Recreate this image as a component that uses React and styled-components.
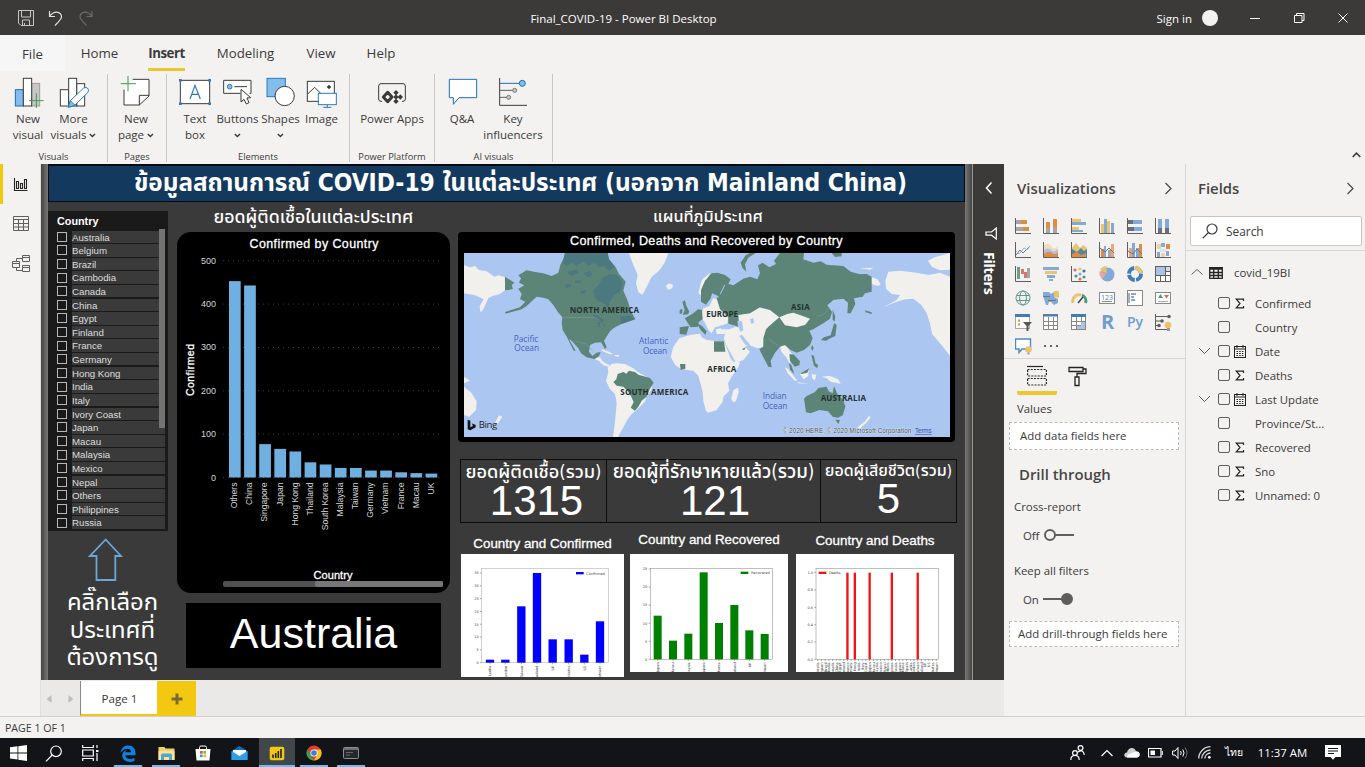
import React from "react";
import styled, { createGlobalStyle } from "styled-components";

const ui = `"Open Sans", "Noto Sans", sans-serif`;
const arial = `"Liberation Sans", Arial, sans-serif`;
const thai = `"DejaVu Sans Condensed", "Noto Sans Thai", "Loma", "Garuda", sans-serif`;

const GlobalStyle = createGlobalStyle`
  * { box-sizing: border-box; }
  body { margin: 0; overflow: hidden; background: #f3f2f1; font-family: ${ui}; color: #3b3a39; }
  svg { display: block; flex: none; }
`;

const Window = styled.div`
  width: 1365px;
  height: 767px;
  display: flex;
  flex-direction: column;
  overflow: hidden;
  background: #f3f2f1;
  white-space: nowrap;
`;

/* ---------- title bar ---------- */
const TitleBar = styled.header`
  height: 35px;
  flex: none;
  background: #3b3a39;
  color: #fff;
  display: grid;
  grid-template-columns: 400px 447px 1fr;
  align-items: center;
  font-size: 11.5px;
`;
const QuickAccess = styled.div`
  display: flex;
  align-items: center;
  gap: 14px;
  padding-left: 18px;
`;
const WindowTitle = styled.div`
  text-align: center;
  padding-top: 1px;
`;
const WindowControls = styled.div`
  display: flex;
  align-items: center;
  justify-content: flex-end;
  padding-right: 17px;
`;
const SignIn = styled.span`
  margin-right: 10px;
  padding-top: 1px;
`;
const Avatar = styled.span`
  width: 16px;
  height: 16px;
  border-radius: 50%;
  background: #f3f2f1;
  margin-right: 32px;
`;

/* ---------- ribbon ---------- */
const TabRow = styled.nav`
  height: 36px;
  flex: none;
  display: flex;
  align-items: stretch;
  font-size: 13.3px;
`;
const FileTab = styled.div`
  width: 65px;
  background: #f6f6f6;
  text-align: center;
  line-height: 39px;
`;
const Tab = styled.div`
  margin-left: ${(p) => p.$gap}px;
  width: ${(p) => p.$w}px;
  line-height: 37px;
  font-weight: ${(p) => (p.$active ? 700 : 400)};
  letter-spacing: ${(p) => (p.$active ? "-0.5px" : "0")};
  border-bottom: 3px solid ${(p) => (p.$active ? "#ecc52f" : "transparent")};
  display: flex;
  justify-content: center;
`;
const Ribbon = styled.div`
  height: 93px;
  flex: none;
  display: flex;
  position: relative;
`;
const Group = styled.section`
  width: ${(p) => p.$w}px;
  margin: 3px 0 2px;
  padding-left: ${(p) => p.$pad}px;
  border-right: 1px solid #c8c6c4;
  display: flex;
  flex-direction: column;
`;
const GroupItems = styled.div`
  display: flex;
  flex: none;
  height: 76px;
`;
const GroupCaption = styled.div`
  flex: none;
  font-size: 9.3px;
  line-height: 13px;
  margin-left: -${(p) => p.$pad}px;
  text-align: center;
`;
const RibbonButton = styled.div`
  width: ${(p) => p.$w}px;
  flex: none;
  display: flex;
  flex-direction: column;
  align-items: center;
  padding-top: 2px;
  font-size: 11.5px;
  line-height: 16px;
  svg.icon { margin-bottom: 3px; }
`;
const LabelLine = styled.div`
  display: flex;
  align-items: center;
  gap: 3px;
  height: 16px;
`;
const RibbonCollapse = styled.div`
  position: absolute;
  right: 4px;
  bottom: 6px;
`;

/* ---------- work area ---------- */
const Work = styled.div`
  height: 552px;
  flex: none;
  display: flex;
`;
const Rail = styled.aside`
  width: 41px;
  display: flex;
  flex-direction: column;
  border-right: 1px solid #e1dfdd;
`;
const RailItem = styled.div`
  height: 40px;
  border-left: 3px solid ${(p) => (p.$active ? "#f2c811" : "transparent")};
  padding-left: 6px;
  display: flex;
  align-items: center;
`;
const Center = styled.div`
  width: 963px;
  display: flex;
  flex-direction: column;
`;
const Stage = styled.div`
  height: 516px;
  display: flex;
`;
const Edge = styled.div`
  width: 7px;
  background: linear-gradient(to right, ${(p) => p.$from}, ${(p) => p.$to});
`;
const Page = styled.main`
  width: 917px;
  background: #3a3a3a;
  color: #fff;
  display: flex;
  flex-direction: column;
  overflow: hidden;
`;
const Banner = styled.h1`
  margin: 0;
  height: 38px;
  flex: none;
  background: #133a5e;
  border: 1px solid #050b12;
  border-top-width: 2px;
  text-align: center;
  padding-left: 28px;
  font: 700 24.3px/34px ${thai};
`;
const Board = styled.div`
  display: flex;
  flex: 1;
`;
const SlicerColumn = styled.div`
  width: 129px;
  padding-top: 9px;
`;
const Slicer = styled.div`
  width: 120px;
  height: 320px;
  background: #1b1a1a;
  padding: 4px 3px 0 9px;
  font-family: ${arial};
`;
const SlicerTitle = styled.div`
  font-size: 10.8px;
  font-weight: 700;
  line-height: 13px;
  height: 14px;
`;
const SlicerBody = styled.div`
  display: flex;
  position: relative;
`;
const SlicerList = styled.div`
  flex: 1;
  padding-top: 1px;
`;
const SlicerRow = styled.div`
  height: 13.62px;
  display: flex;
  align-items: center;
  gap: 5px;
`;
const Box = styled.span`
  width: 10px;
  height: 10px;
  border: 1.5px solid #b9b7b5;
`;
const SlicerLabel = styled.span`
  flex: 1;
  height: 12.4px;
  background: #3a3a3a;
  color: #dedede;
  font-size: 9.7px;
  line-height: 13px;
`;
const SlicerScroll = styled.div`
  position: absolute;
  right: 0;
  top: 0;
  width: 6px;
  height: 199px;
  background: #767472;
`;
const Hint = styled.div`
  width: 120px;
  padding-left: 9px;
  margin-top: 7px;
  display: flex;
  flex-direction: column;
  align-items: center;
  font: 400 23.9px/27.5px ${thai};
  svg { margin: 0 14px 7px 0; }
`;
const ChartColumn = styled.div`
  width: 281px;
`;
const SectionTitle = styled.h2`
  margin: 0;
  height: 30px;
  text-align: center;
  font: 500 ${(p) => p.$size}px/30px ${thai};
  width: ${(p) => p.$w}px;
`;
const ChartCard = styled.div`
  width: 273px;
  height: 361px;
  border-radius: 14px;
  background: #000;
`;
const CountryCard = styled.div`
  width: 255px;
  height: 65px;
  margin: 10px 0 0 9px;
  background: #000;
  text-align: center;
  font: 43px/61px ${arial};
`;
const MapColumn = styled.div`
  width: 507px;
`;
const MapCard = styled.div`
  width: 497px;
  height: 210px;
  border-radius: 4px;
  background: #000;
  padding: 0 6px;
`;
const MapTitle = styled.div`
  text-align: center;
  font: 12.6px/19px ${arial};
  height: 21px;
  -webkit-text-stroke: 0.3px #fff;
  letter-spacing: 0.35px;
`;
const Kpis = styled.div`
  width: 497px;
  height: 64px;
  margin: 17px 0 0 2px;
  border: 1px solid #0c0c0c;
  display: flex;
`;
const Kpi = styled.div`
  width: ${(p) => p.$w}px;
  border-right: ${(p) => (p.$last ? 0 : 1)}px solid #0c0c0c;
  display: flex;
  flex-direction: column;
  align-items: center;
`;
const KpiLabel = styled.div`
  font: 500 ${(p) => p.$size}px/${(p) => p.$h + 1}px ${thai};
  height: ${(p) => p.$h}px;
`;
const KpiValue = styled.div`
  font: 42px/38px ${arial};
  padding-left: ${(p) => p.$shift || 0}px;
`;
const Plots = styled.div`
  display: flex;
  gap: 6px;
  margin: 10px 0 0 3px;
`;
const Plot = styled.figure`
  margin: 0 ${(p) => p.$mr || 0}px 0 0;
  width: ${(p) => p.$w}px;
`;
const PlotTitle = styled.figcaption`
  height: 21px;
  text-align: center;
  font: 13.4px/${(p) => p.$lh}px ${arial};
  -webkit-text-stroke: 0.3px #fff;
`;
const CanvasRule = styled.div`
  width: 1px;
  background: #9a9896;
`;
const FiltersPane = styled.aside`
  width: 31px;
  background: #3b3a39;
  color: #fff;
  display: flex;
  flex-direction: column;
  align-items: center;
  padding-top: 17px;
`;
const FunnelSlot = styled.div`
  margin: 32px 0 12px 6px;
`;
const FiltersLabel = styled.div`
  writing-mode: vertical-rl;
  font-size: 14.2px;
  font-weight: 700;
  letter-spacing: -0.3px;
  line-height: 16px;
`;

/* ---------- page tabs + status ---------- */
const PageTabs = styled.div`
  height: 36px;
  background: #eae9e8;
  display: flex;
  padding-top: 1px;
`;
const PageNav = styled.div`
  width: 39px;
  display: flex;
  align-items: center;
  justify-content: space-between;
  padding: 0 6px 0 5px;
`;
const PageTab = styled.div`
  width: 77px;
  border-left: 1px solid #8a8886;
  border-bottom: 2px solid #f2c811;
  background: #fff;
  text-align: center;
  padding-left: 1px;
  font-size: 11.6px;
  line-height: 35px;
`;
const AddPage = styled.div`
  width: 39px;
  background: #f2c811;
  display: flex;
  align-items: center;
  justify-content: center;
`;
const StatusBar = styled.footer`
  height: 22px;
  flex: none;
  border-top: 1px solid #d2d0ce;
  padding-left: 5px;
  font-size: 10.6px;
  line-height: 23px;
`;

/* ---------- right panes ---------- */
const VizPane = styled.aside`
  width: 182px;
  border-right: 1px solid #d8d6d4;
  font-size: 11.4px;
  display: flex;
  flex-direction: column;
`;
const PaneHead = styled.div`
  display: flex;
  align-items: center;
  justify-content: space-between;
  height: 48px;
  padding: 0 ${(p) => p.$r}px 0 ${(p) => p.$l}px;
  font-size: 14.9px;
  font-weight: 600;
  color: #484644;
`;
const VizGrid = styled.div`
  display: grid;
  grid-template-columns: repeat(6, 28px);
  grid-auto-rows: 24px;
  padding: 2px 0 0 10px;
  height: 147px;
  border-bottom: 1px solid #d8d6d4;
`;
const VizCell = styled.div`
  display: flex;
  align-items: center;
  padding-left: 1px;
`;
const WellTabs = styled.div`
  display: flex;
  height: 36px;
  padding: 6px 0 0 13px;
  gap: 11px;
`;
const WellTab = styled.div`
  width: 40px;
  display: flex;
  justify-content: ${(p) => (p.$active ? "center" : "flex-start")};
  border-bottom: ${(p) => (p.$active ? "4px solid #ecc52f" : "0")};
  border-radius: 2px;
`;
const PaneLabel = styled.div`
  margin-top: ${(p) => p.$mt}px;
  padding-left: ${(p) => p.$l || 13}px;
  line-height: 16px;
`;
const DropWell = styled.div`
  margin: ${(p) => p.$mt}px 6px 0 5px;
  height: ${(p) => p.$h}px;
  line-height: ${(p) => p.$h - 2}px;
  border: 1px dashed #bdbbb9;
  background: #fff;
  padding-left: ${(p) => p.$l}px;
`;
const DrillTitle = styled.div`
  margin-top: 14px;
  padding-left: 15px;
  font-size: 14.9px;
  line-height: 20px;
  font-weight: 600;
  color: #484644;
`;
const Toggle = styled.div`
  display: flex;
  align-items: center;
  gap: 4px;
  height: 16px;
  margin-top: ${(p) => p.$mt}px;
  padding-left: 19px;
`;
const FieldsPane = styled.aside`
  flex: 1;
  font-size: 11.4px;
`;
const Search = styled.div`
  margin: 4px 3px 0 4px;
  height: 30px;
  border: 1px solid #c8c6c4;
  border-radius: 2px;
  background: #fff;
  display: flex;
  align-items: center;
  gap: 8px;
  padding-left: 11px;
  font-size: 11.9px;
`;
const FieldTree = styled.div`
  margin-top: 4px;
  border-top: 1px solid #d8d6d4;
  padding-top: 8px;
`;
const TableRow = styled.div`
  height: 26px;
  display: flex;
  align-items: center;
  padding-left: 5px;
  svg + svg { margin: 2px 11px 0 6px; }
`;
const FieldRows = styled.div`
  padding-top: 6px;
`;
const FieldRow = styled.div`
  height: 24px;
  display: grid;
  grid-template-columns: 20px 15px 22px 1fr;
  padding-left: 12px;
  align-items: center;
`;
const Check = styled.span`
  width: 12px;
  height: 12px;
  border: 1px solid #605e5c;
  border-radius: 2px;
`;
const Kind = styled.span`
  display: flex;
  justify-content: center;
  width: 14px;
`;

/* ---------- taskbar ---------- */
const Taskbar = styled.div`
  height: 29px;
  flex: none;
  background: #121417;
  color: #fff;
  display: flex;
`;
const TaskItem = styled.div`
  width: ${(p) => p.$w || 37}px;
  display: flex;
  flex-direction: column;
  align-items: center;
  background: ${(p) => (p.$active ? "#41464b" : "transparent")};
  &::after {
    content: "";
    width: ${(p) => (p.$active ? "100%" : "28px")};
    height: 2px;
    background: ${(p) => (p.$open ? "#76b9ed" : "transparent")};
  }
`;
const TaskIcon = styled.div`
  flex: 1;
  display: flex;
  align-items: center;
  padding-top: 3px;
`;
const Tray = styled.div`
  margin-left: auto;
  width: 301px;
  display: flex;
  align-items: center;
  font-size: 11.4px;
`;
const TrayItem = styled.div`
  width: ${(p) => p.$w}px;
  display: flex;
  justify-content: center;
  font-size: ${(p) => p.$fs || 11.4}px;
`;

const dark = "#3b3a39";
const blue = "#2b7cb9";

const Caret = () => (
  <svg width="7" height="5" viewBox="0 0 7 5" fill="none" stroke={dark} strokeWidth="1.4"><path d="M.8 1l2.6 2.6L6 1" /></svg>
);

const Icon = ({ x, children }) => (
  <svg className="icon" width="34" height="32" viewBox={`${x} 228 102 96`} fill="none" stroke={dark} strokeWidth="3">{children}</svg>
);

const NewVisualIcon = () => (
  <Icon x={33}>
    <rect x="95" y="250" width="24" height="68" fill="#c8c6c4" stroke="#a19f9d" />
    <rect x="46" y="269" width="24" height="49" fill="#83bdec" stroke="#1f6fad" />
    <rect x="70" y="235" width="25" height="83" fill="#fff" />
    <path d="M109 280v44M87 302h44" stroke="#3f9c54" />
  </Icon>
);
const MoreVisualsIcon = () => (
  <Icon x={171}>
    <rect x="230" y="251" width="24" height="67" fill="#fff" />
    <rect x="181" y="269" width="25" height="49" fill="#fff" />
    <rect x="206" y="235" width="24" height="83" fill="#fff" />
    <path d="M205 322l6-20 40-38q8-4 13 2 4 6-1 12l-39 38z" fill="#fff" stroke={blue} />
    <path d="M205 322l6-20 14 14z" fill="#83bdec" stroke={blue} />
  </Icon>
);
const NewPageIcon = () => (
  <Icon x={358}>
    <path d="M399 238h49v50l-29 27h-46v-46" fill="#fff" />
    <path d="M448 286h-29v29" />
    <path d="M385 228v46M363 251h46" stroke="#3f9c54" />
  </Icon>
);
const TextBoxIcon = () => (
  <Icon x={534}>
    <rect x="541" y="241" width="88" height="70" fill="#fff" />
    <path d="M570 297l15-41 16 41M575 283h21" stroke={blue} strokeWidth="3.6" />
    {[[541, 241], [629, 241], [541, 311], [629, 311]].map(([a, b]) => (
      <rect key={a + "-" + b} x={a - 4} y={b - 4} width="8" height="8" fill={blue} stroke="none" />
    ))}
  </Icon>
);
const ButtonsIcon = () => (
  <Icon x={662}>
    <path d="M720 280h-50v-39h82v39h-4" fill="#fff" />
    <circle cx="688" cy="260" r="7" fill="#83bdec" stroke={blue} />
    <path d="M702 260h38" />
    <path d="M722 268v38l9-8 7 14 8-4-6-14 11-1z" fill="#fff" />
  </Icon>
);
const ShapesIcon = () => (
  <Icon x={790}>
    <rect x="799" y="235" width="55" height="55" fill="#83bdec" stroke={blue} />
    <circle cx="852" cy="288" r="29" fill="#fff" />
  </Icon>
);
const ImageIcon = () => (
  <Icon x={915}>
    <rect x="922" y="244" width="81" height="60" fill="#fff" />
    <path d="M922 283l22-21 18 18" />
    <circle cx="987" cy="261" r="4" fill={dark} />
    <rect x="955" y="280" width="54" height="34" fill="#fff" stroke={blue} />
    <path d="M982 314v8M970 322h24" stroke={blue} />
  </Icon>
);
const PowerAppsIcon = () => (
  <Icon x={1125}>
    <path d="M1146 304h-3q-7 0-7-7v-39q0-7 7-7h66q7 0 7 7v39q0 7-7 7h-3" />
    <path d="M1163 277l13 14-13 14-13-14z" fill="#f3f2f1" strokeWidth="9" strokeLinejoin="round" />
    {[[1188, 278], [1201, 291], [1188, 304], [1188, 291]].map(([a, b]) => (
      <path key={a + "-" + b} d={`M${a} ${b - 8}l8 8-8 8-8-8z`} fill={dark} stroke="none" />
    ))}
  </Icon>
);
const QnaIcon = () => (
  <Icon x={1335}>
    <path d="M1348 238h82v55h-53l-17 20v-20h-12z" fill="#fff" stroke="#1f6fad" />
  </Icon>
);
const InfluencersIcon = () => (
  <Icon x={1488}>
    <path d="M1499 234v82h82" />
    <path d="M1499 250h60" stroke="#1f6fad" />
    <path d="M1499 271h40M1499 292h22" stroke="#605e5c" />
    <circle cx="1567" cy="250" r="9" fill="#83bdec" stroke="#1f6fad" />
    <circle cx="1544" cy="271" r="6" fill="#c8c6c4" stroke="#7a7876" />
    <circle cx="1526" cy="292" r="6" fill="#c8c6c4" stroke="#7a7876" />
  </Icon>
);

const ribbon = [
  { name: "Visuals", w: 108, pad: 5, items: [
    { w: 46, icon: NewVisualIcon, lines: ["New", "visual"] },
    { w: 45, icon: MoreVisualsIcon, lines: ["More", "visuals"], caret: "inline" }] },
  { name: "Pages", w: 59, pad: 5, items: [{ w: 46, icon: NewPageIcon, lines: ["New", "page"], caret: "inline" }] },
  { name: "Elements", w: 183, pad: 7, items: [
    { w: 42, icon: TextBoxIcon, lines: ["Text", "box"] },
    { w: 43, icon: ButtonsIcon, lines: ["Buttons"], caret: "below" },
    { w: 43, icon: ShapesIcon, lines: ["Shapes"], caret: "below" },
    { w: 39, icon: ImageIcon, lines: ["Image"] }] },
  { name: "Power Platform", w: 85, pad: 1, items: [{ w: 82, icon: PowerAppsIcon, lines: ["Power Apps"] }] },
  { name: "AI visuals", w: 118, pad: 4, items: [
    { w: 46, icon: QnaIcon, lines: ["Q&A"] },
    { w: 56, icon: InfluencersIcon, lines: ["Key", "influencers"] }] },
];

const countries = ["Australia", "Belgium", "Brazil", "Cambodia", "Canada", "China", "Egypt", "Finland", "France", "Germany", "Hong Kong", "India", "Italy", "Ivory Coast", "Japan", "Macau", "Malaysia", "Mexico", "Nepal", "Others", "Philippines", "Russia"];

const confirmed = [
  ["Others", 453], ["China", 443], ["Singapore", 77], ["Japan", 66], ["Hong Kong", 60], ["Thailand", 35], ["South Korea", 30],
  ["Malaysia", 22], ["Taiwan", 22], ["Germany", 16], ["Vietnam", 16], ["France", 12], ["Macau", 10], ["UK", 9],
];

const ConfirmedChart = () => (
  <svg width="273" height="361" viewBox="177 232 273 361" fontFamily="Liberation Sans, Arial, sans-serif">
    <text x="314" y="248" fontSize="12.4" fill="#fff" stroke="#fff" strokeWidth=".3" textAnchor="middle" textLength="129">Confirmed by Country</text>
    {[0, 100, 200, 300, 400, 500].map((v) => (
      <g key={v}>
        <line x1="223" x2="443" y1={477.5 - v * 0.4335} y2={477.5 - v * 0.4335} stroke="#3c3c3c" strokeDasharray="1 4" />
        <text x="216" y={480.5 - v * 0.4335} fontSize="9" fill="#d6d6d6" textAnchor="end">{v}</text>
      </g>
    ))}
    {confirmed.map(([name, v], i) => (
      <g key={name}>
        <rect x={229 + i * 15.12} y={477.5 - v * 0.4335} width="11.7" height={v * 0.4335} fill="#70b0e0" />
        <text transform={`translate(${237.2 + i * 15.12} 482.5) rotate(-90)`} fontSize="8.6" fill="#d6d6d6" textAnchor="end">{name}</text>
      </g>
    ))}
    <text transform="translate(194 370) rotate(-90)" fontSize="10.5" fill="#fff" stroke="#fff" strokeWidth=".3" textAnchor="middle" textLength="52">Confirmed</text>
    <text x="333" y="579" fontSize="11" fill="#fff" stroke="#fff" strokeWidth=".3" textAnchor="middle" textLength="39">Country</text>
    <rect x="223" y="581" width="220" height="6" rx="2" fill="#505050" />
    <rect x="315" y="581" width="128" height="6" rx="2" fill="#777" />
  </svg>
);

const green = "#5d8577";
const WorldMap = () => (
  <svg width="486" height="184" viewBox="27 69 1458 552" fontFamily="Open Sans, Noto Sans, sans-serif">
    <rect x="27" y="69" width="1458" height="552" fill="#abc7f1" />
    <g fill="#f1f0ed">
      <path d="M27 105L45 112 60 108 72 120 95 124 118 140 130 136 150 142V180L135 192 112 198 100 205 92 222 84 240 76 247 74 228 86 208 60 196 27 190z" />
      <path d="M522 69H640L632 90 628 100 612 122 590 140 578 165 562 195 550 186 543 160 548 135 538 112 530 92z" />
      <path d="M632 168l10-8 12 4-2 10-12 6z" />
      <path d="M418 386l17-4 8 12 12 8 8 3-2 5-16-4-12-12z" />
      <path d="M458 412L470 402 485 400 510 402 535 415 548 426 575 440 592 455 590 478 575 500 570 515 545 540 530 552 518 568 505 592 497 605 490 621H474L478 590 482 555 485 520 480 492 464 476 453 452 460 428z" />
      <path d="M27 470l22 18 16 26-2 26-20 20-16-5zM27 440l18 12-18 8zM132 556l10 5-14 20-10 2z" />
      <path d="M440 358l24 8 10 7-12-1-22-10zM480 374l14 2-5 5-10-3z" />
    </g>
    <path fill={green} d="M150 140l28 18-8 8 4 10-12 4-12 1zM330 69H458L462 88 482 112 492 132 512 155 505 182 518 212 528 244 541 268 520 275 500 282 480 292 466 302 456 318 447 332 455 352 450 357 438 337 420 338 405 345 402 365 412 378 425 368 437 366 432 378 418 387 395 382 378 370 370 355 350 332 342 328 362 362 356 362 336 322 323 300 320 280 322 262 308 245 295 225 280 208 265 203 245 200 232 212 215 228 200 238 152 251 150 246 195 232 211 215 195 208 200 192 190 176 208 166 192 158 198 145 190 136 215 121 240 126 265 130 290 138 310 128 316 105 326 85z" />
    <g fill="#467584" opacity=".7">
      <path d="M330 69H458L462 88 480 110 462 122 448 108 430 112 420 98 400 108 385 95 365 108 350 98 335 108 322 98z" />
      <path d="M415 180l16-14 12-24 22-10 22 4 16 20-6 28-18 10-12 18-8 22-14-14-18-8-10-14z" />
      <path d="M335 125l30-6 6 10-24 8zM385 130l20-8 8 14-16 6zM360 150l20 2-4 8-16-2zM330 165l14-4 6 8-16 6zM375 185l14-6 4 8-14 6z" />
      <path d="M495 260l30-2 14 10-25 8-15 5zM412 252l22 8 14 12-8 5-20-12zM428 276l8 0-2 16-6-1zM440 280l12 6-4 5z" />
    </g>
    <path d="M325 262h95l12 8M358 332l35 10 20 20" stroke="#86a396" strokeWidth="1.5" fill="none" />
    <path fill={green} d="M488 432L505 426 514 431 522 422 540 426 550 434 585 444 596 458 584 478 575 500 560 512 550 530 540 542 527 533 536 517 528 498 520 486 505 470 485 467 475 456 484 448z" />
    <g transform="translate(735 0)">
      <g fill="#f1f0ed">
        <path d="M-62 325L-30 315 0 311 5 322 20 330 42 332 72 334 82 360 92 385 100 395 120 397 115 412 95 440 84 460 88 482 70 500 68 515 50 540 25 548 18 543 10 512 8 485 0 455 -5 437 -20 422 -55 418 -75 405 -88 380 -80 350z" />
        <path d="M100 480l14-7 2 12-8 28-9 4-5-12z" />
        <path d="M48 298L80 290 118 292 112 255 150 248 175 232 210 240 238 262 205 290 195 320 188 352 172 355 148 345 135 350 150 365 130 390 108 398 95 375 78 345 72 325 75 312 50 312z" />
        <path d="M-5 190L5 150 30 128 18 160 8 200zM10 235L28 228 40 204 55 210 60 232 85 258 82 282 45 292 35 310 25 300 15 278 2 262z" />
        <path d="M240 345l18 2 18 26-6 28-12-20-14-16zM255 412l10 6 27 34-8 0-22-24zM300 432l26-18-1 24-14 10zM290 456l36 6-30-2zM335 432l14 2-4 16-8-4zM366 440l22-3 26 10 8 14-30-6-12-10z" />
        <path d="M508 556l3 8-12 14-20 18-6-4 22-18z" />
        <path d="M512 140l20 8 10 14-8 6-20-6zM556 152L565 125 600 122 650 128 685 135 720 128 750 140V377L722 342 696 312 690 280 680 250 664 225 640 206 615 208 590 215 550 232 590 210 600 195 575 192 558 176z" />
        <path d="M684 92l20-10 46-13v50l-30 2-24-10zM480 115l40-2-10 6z" />
      </g>
      <g fill={green}>
        <path d="M3 215L3 180 15 152 35 130 52 128 75 135 92 148 85 162 72 166 60 192 72 198 62 204 50 196 36 190 32 205 18 224z" />
        <path d="M78 160L100 166 130 146 150 140 172 148 180 130 174 106 188 98 208 112 228 102 222 92 240 69H312L310 88 340 98 362 94 380 104 430 108 452 125 480 133 500 132 515 140V185L495 190 488 200 462 205 466 222 452 250 442 250 444 218 430 206 400 210 382 226 396 246 390 266 370 280 352 290 340 298 328 302 338 325 330 345 312 360 290 368 272 360 255 345 240 350 225 368 212 392 215 412 205 410 190 382 178 358 190 350 190 325 198 298 208 288 238 262 210 240 180 232 150 250 115 255 118 292 102 286 85 282 85 262 60 238 50 205 60 198z" />
        <path d="M122 98l15-22 12-7h18l-22 14-10 20 4 22-12-12zM395 69h30v10l-20 2z" />
        <path d="M-53 215l8-4 3 14 10 20-4 8-16 2 6-15zM-61 240l8-4 0 14-8 2zM-61 292l28-4-8 26-20-2zM-46 265l26-15 14-12 12 2 2 28-12 8-2 14-22 2zM-10 278l16 10 14 16-4 10-14-14z" />
        <path d="M42 334h30l4 31H42zM-60 402h16v14l-14 4zM125 358l12-6-4 8z" />
        <path d="M268 372l14 2 18 20-2 12-14 4-14-18zM266 398l8 8 9 26-12-12zM302 430l26-16-6 14-18 4zM336 345l5 8-4 10-4-8zM334 375l8 2 4 22 8 6-2 10-10-8zM398 238l8 22-2 14-6-4zM402 280l8 4-4 34-14 6-14 8-16-2 10-8 20-6zM495 241l20 6v5l-18-5z" />
        <path d="M312 506L320 498 345 486 355 474 380 470 386 484 398 490 402 468 412 492 430 510 436 530 428 556 414 563 398 560 384 544 358 540 332 550 318 547zM406 569l14 1-5 12z" />
      </g>
      <path fill="#f1f0ed" d="M238 262L262 252 280 248 302 256 330 266 316 284 290 292 255 286z" />
      <path fill="#abc7f1" d="M60 288l24-8 20 12-16 6-24 0zM112 272l14 2 4 26-8 6-8-16zM150 268l10-4 2 14-8 4zM126 315l22 26 2 8-14-4-18-28z" />
      <path d="M385 232q-10 30-35 25M205 325q20 20 35 22" stroke="#86a396" strokeWidth="1.5" fill="none" />
    </g>
    <g fontWeight="700" fontSize="24" fill="#25302d">
      <text x="344" y="250" textLength="208">NORTH AMERICA</text>
      <text x="496" y="495" textLength="204">SOUTH AMERICA</text>
      <text x="754" y="262" textLength="95">EUROPE</text>
      <text x="757" y="426" textLength="87">AFRICA</text>
      <text x="1008" y="241" textLength="56">ASIA</text>
      <text x="1097" y="514" textLength="136">AUSTRALIA</text>
    </g>
    <g fontSize="25" fill="#4762bd">
      <text x="176" y="336" textLength="74">Pacific</text>
      <text x="178" y="364" textLength="74">Ocean</text>
      <text x="552" y="343" textLength="88">Atlantic</text>
      <text x="564" y="371" textLength="72">Ocean</text>
      <text x="923" y="508" textLength="72">Indian</text>
      <text x="923" y="536" textLength="74">Ocean</text>
    </g>
    <path d="M38 569l8 3v20l-8 6zM46 592l8-4-4-8 12 5v7l-16 9-8-3z" fill="#111" />
    <text x="71" y="595" fontSize="29" fill="#222" textLength="56">Bing</text>
    <text x="983" y="609" fontSize="19" fill="#444" fontFamily="Liberation Sans, sans-serif" textLength="386" stroke="#fff" strokeWidth="2" strokeOpacity=".7" paintOrder="stroke">© 2020 HERE, © 2020 Microsoft Corporation</text>
    <text x="1380" y="609" fontSize="19" fill="#3a57a8" fontFamily="Liberation Sans, sans-serif" textDecoration="underline" textLength="50">Terms</text>
  </svg>
);

const BarPlot = ({ w, h, view, frame, color, frameColor, legend, legendX, legendEnd, ticks, bars, barWidth, top }) => {
  const [x0, y0, x1, y1] = frame;
  return (
    <svg width={w} height={h} viewBox={view} fontFamily="DejaVu Sans, sans-serif" fontSize="10.5" fill="#444">
      <rect x="0" y="300" width="1100" height="400" fill="#fff" />
      <rect x={x0} y={y0} width={x1 - x0} height={y1 - y0} fill="none" stroke={frameColor} strokeWidth="1.6" />
      {ticks.map((t, i) => {
        const y = top + ((y1 - top) * i) / (ticks.length - 1);
        return (
          <g key={t}>
            <path d={`M${x0 - 5} ${y}H${x0}`} stroke="#555" strokeWidth="1.5" />
            <text x={x0 - 9} y={y + 4} textAnchor="end">{t}</text>
          </g>
        );
      })}
      {bars.map(([x, y, name], i) => (
        <g key={i}>
          {y < y1 && <rect x={x - barWidth / 2} y={y} width={barWidth} height={y1 - y} fill={color} />}
          <path d={`M${x} ${y1}v5`} stroke="#555" strokeWidth="1.5" />
          <text transform={`translate(${x + 4} ${y1 + 9}) rotate(-90)`} textAnchor="end">{name}</text>
        </g>
      ))}
      <rect x={legendX} y={y0 + 10} width="23" height="7" fill={color} />
      <text x={legendX + 31} y={y0 + 18} textLength={legendEnd - legendX - 31}>{legend}</text>
    </svg>
  );
};

const bluePlot = {
  w: 163, h: 123, view: "18 314 489 369", frame: [80, 358, 460, 640], color: "#0000ff", frameColor: "#aaa",
  legend: "Confirmed", legendX: 363, legendEnd: 450, ticks: [35, 30, 25, 20, 15, 10, 5, 0], barWidth: 25, top: 371,
  bars: [[105, 631, "Sri Lanka"], [151, 631, "Sweden"], [199, 471, "Taiwan"], [246, 371, "Thailand"], [293, 570, "UK"], [341, 570, "Emirates"], [388, 616, "US"], [435, 516, "Vietnam"]],
};
const greenPlot = {
  w: 158, h: 118, view: "526 312 474 354", frame: [587, 355, 954, 628], color: "#008000", frameColor: "#888",
  legend: "Recovered", legendX: 858, legendEnd: 945, ticks: [25, 20, 15, 10, 5, 0], barWidth: 24, top: 357,
  bars: [[609, 497, "Japan"], [655, 572, "Macau"], [701, 551, "Malaysia"], [747, 367, "Singapore"], [793, 519, "South Korea"], [839, 465, "Thailand"], [884, 541, "UK"], [930, 552, "Vietnam"]],
};
const deathNames = ["Australia", "Belgium", "Brazil", "Cambodia", "Canada", "China", "Egypt", "Finland", "France", "Germany", "Hong Kong", "India", "Italy", "Ivory Coast", "Japan", "Macau", "Malaysia", "Mexico", "Nepal", "Others", "Philippines", "Russia", "Singapore", "South Korea", "Spain", "Sri Lanka", "Sweden", "Taiwan", "Thailand", "UK", "US", "Emirates", "Vietnam"];
const deathIndex = { 8: 1, 10: 1, 14: 1, 20: 1, 27: 1 };
const redPlot = {
  w: 158, h: 118, view: "290 312 474 354", frame: [350, 355, 718, 628], color: "#f01414", frameColor: "#888",
  legend: "Deaths", legendX: 358, legendEnd: 424, ticks: ["1.0", "0.8", "0.6", "0.4", "0.2", "0.0"], barWidth: 7, top: 368,
  bars: deathNames.map((n, i) => [355.5 + i * 11.1, deathIndex[i] ? 368 : 628, n]),
};

const axis = <path d="M.5 0v15.5H16" stroke="#605e5c" fill="none" />;
const O = "#e08c42", G = "#a8a6a4", B = "#83a9d6", Y = "#e9c46f", D = "#6a6e78";
const rects = (list) => list.map(([x, y, w, h, f], i) => <rect key={i} x={x} y={y} width={w} height={h} fill={f} />);
const vizIcons = [
  <>{axis}{rects([[1, 2, 5, 4, G], [6, 2, 6, 4, O], [1, 9, 7, 4, G], [8, 9, 6, 4, O]])}</>,
  <>{axis}{rects([[3, 4, 4, 6, O], [3, 10, 4, 5, G], [10, 1, 4, 8, O], [10, 9, 4, 6, G]])}</>,
  <>{axis}{rects([[1, 1, 9, 3, Y], [1, 4, 14, 3, B], [1, 9, 7, 3, Y], [1, 12, 11, 2, B]])}</>,
  <>{axis}{rects([[2, 6, 3, 9, Y], [5, 1, 3, 14, B], [8, 3, 3, 12, Y], [12, 5, 3, 10, B]])}</>,
  <>{axis}{rects([[1, 2, 5, 4, D], [6, 2, 9, 4, B], [1, 9, 6, 4, D], [7, 9, 8, 4, B]])}</>,
  <>{axis}{rects([[3, 1, 4, 9, B], [3, 10, 4, 5, D], [10, 1, 4, 9, B], [10, 10, 4, 5, D]])}</>,
  <>{axis}<path d="M1 13l4-5 3 3 7-7" stroke="#777" fill="none" /><path d="M1 9l3 3 5-6 3 2 3-4" stroke="#9bb6d8" fill="none" /></>,
  <>{axis}<path d="M1 4q4-5 7 0t7 0v10H1z" fill="#f3dcb6" /><path d="M1 8q4-3 7 0t7-1v8H1z" fill="#a9c4e4" /><path d="M1 12q5-4 8-1t6-1v5H1z" fill={O} /></>,
  <>{axis}<path d="M1 6l4-5 4 5 3-3 4 3v9H1z" fill={Y} /><path d="M1 7l5 3 4-4 3 3 3-2v8H1z" fill="#4f86a8" /><path d="M1 12l5-2 4 3 5-2v4H1z" fill={O} /></>,
  <>{axis}{rects([[2, 7, 3, 8, O], [5, 4, 2, 11, B], [9, 8, 3, 7, G], [12, 2, 3, 13, "#e8a878"]])}<path d="M1 6l5 4 4-4 5 5" stroke="#777" fill="none" /></>,
  <>{axis}{rects([[2, 6, 3, 9, "#e8a878"], [5, 1, 3, 14, B], [9, 6, 3, 9, B], [12, 2, 3, 13, O]])}<path d="M1 9l5 3 4-5 5 5" stroke="#777" fill="none" /></>,
  <>{axis}{rects([[2, 2, 4, 5, "#ecd3a5"], [6, 1, 4, 4, B], [11, 2, 4, 5, O], [2, 10, 3, 5, B], [6, 11, 4, 4, "#ecd3a5"], [11, 9, 3, 5, B]])}<path d="M5 7h6v3H5z" fill="#d9e4f1" /></>,
  <>{axis}{rects([[2, 1, 3, 12, "#6e9e8a"], [6, 3, 3, 5, "#cf7a70"], [9, 6, 3, 6, "#cf7a70"], [12, 2, 3, 10, G]])}</>,
  <>{rects([[0, 1, 16, 3, B], [2, 5, 12, 3, Y], [4, 9, 8, 3, B], [6, 13, 4, 2, B]])}</>,
  <>{axis}{[[4, 4, "#d96f64"], [9, 3, Y], [13, 5, "#3f73ad"], [5, 10, "#4d9a7c"], [9, 8, B], [13, 11, "#4d9a7c"], [9, 13, "#d96f64"]].map(([a, b, c], i) => <circle key={i} cx={a} cy={b} r="1.6" fill={c} />)}</>,
  <><circle cx="8.5" cy="8.5" r="7" fill={B} /><path d="M7.5 7.5L7.5 0A8 8 0 0 0 1 4z" fill={Y} /><path d="M7 8L.6 5A8 8 0 0 0 3 13z" fill="#e8a8a0" /></>,
  <><circle cx="8" cy="8" r="6" fill="none" stroke="#3f7cba" strokeWidth="4" strokeDasharray="8 1.4" /><path d="M8 2a6 6 0 0 1 6 5" stroke={Y} strokeWidth="4" fill="none" /></>,
  <><rect x=".5" y=".5" width="15" height="15" fill="#fff" stroke="#605e5c" /><rect x="1" y="1" width="9" height="8" fill="#a9c4e4" /><rect x="11" y="1" width="4" height="5" fill="#cfdcec" /><path d="M0 9.5h16M10.5 0v16M10 5.5h6M5.5 10v6" stroke="#605e5c" fill="none" /></>,
  <g fill="none" stroke="#5c9a90"><circle cx="8" cy="8" r="7" /><ellipse cx="8" cy="8" rx="3.4" ry="7" /><path d="M1.5 5.5h13M1.5 10.5h13" /></g>,
  <><path d="M0 2h6l2 2 3-2v5l4 2v4l-4 2-3-3H6l-1 3H3L0 6z" fill={B} /><path d="M11 1h5v7l-5-1z" fill={Y} /><path d="M0 6.500h7M5 10.500h8" stroke="#777" fill="none" /></>,
  <><path d="M2 13A6.5 6.5 0 0 1 10 5" stroke={Y} strokeWidth="3" fill="none" /><path d="M11 5a6.5 6.5 0 0 1 3.500 8" stroke="#4d9a7c" strokeWidth="3" fill="none" /><path d="M7 13l5-6" stroke="#444" strokeWidth="1.5" /></>,
  <><rect x=".5" y="2.500" width="15" height="11" fill="#fff" stroke="#8a8886" /><text x="8" y="9.500" fontSize="7" textAnchor="middle" fill="#3f7cba" fontFamily="Open Sans">123</text><path d="M3 11.500h10" stroke="#888" /></>,
  <><rect x=".5" y=".5" width="15" height="15" fill="#fff" stroke="#8a8886" /><path d="M2 3v10" stroke="#605e5c" /><path d="M4 4h5M4 7h3M4 10h4" stroke={B} strokeWidth="2" /></>,
  <><rect x=".5" y="2.500" width="15" height="11" fill="#fff" stroke="#8a8886" /><path d="M3 8l2.500-4L8 8z" fill="#4d9a7c" /><path d="M9 5h5l-2.500 3.500z" fill="#cf6a60" /><path d="M3 11.500h10" stroke="#aaa" /></>,
  <><rect x=".5" y=".5" width="14" height="14" fill="#fff" stroke="#a8a6a4" /><path d="M0 1.500h15" stroke="#3f7cba" strokeWidth="3" /><path d="M3 6.500h2M3 10.500h2" stroke={O} strokeWidth="2" /><path d="M8 8h9l-3.500 4v5h-2v-5z" fill="#555" /></>,
  <><rect x=".5" y=".5" width="14" height="15" fill="#fff" stroke="#8a8886" /><path d="M0 1.500h15" stroke="#3f7cba" strokeWidth="2" /><path d="M5.500 3v13M10.500 3v13M0 7.500h15M0 11.500h15" stroke="#8a8886" /></>,
  <><rect x=".5" y=".5" width="14" height="15" fill="#fff" stroke="#8a8886" /><path d="M0 1.500h15" stroke="#3f7cba" strokeWidth="3" /><path d="M5.500 3v13M10.500 3v13M0 7.500h15M0 11.500h15" stroke="#8a8886" /><path d="M10 8h4v7H6v-3h4z" fill="#a9c4e4" /></>,
  <text x="8.500" y="15" fontSize="20" fontWeight="700" textAnchor="middle" fill="#6f9dd0" fontFamily="Open Sans">R</text>,
  <text x="8" y="12.500" fontSize="14" fontWeight="600" textAnchor="middle" fill="#6f9dd0" fontFamily="Open Sans">Py</text>,
  <><path d="M.5 0v15.500H12M1 2.500h12M1 7h6M1 11.500h3" stroke="#605e5c" fill="none" /><circle cx="14" cy="2.500" r="1.800" fill="#605e5c" /><circle cx="7" cy="7" r="1.800" fill="#605e5c" /><circle cx="4" cy="11.500" r="1.800" fill="#605e5c" /><circle cx="13" cy="11" r="3.300" fill={Y} /><path d="M12 14h3v3h-3z" fill="#999" /></>,
  <><path d="M.5 1h15v10H7l-3 3.500V11H.5z" fill="#fff" stroke="#4a8cc4" strokeWidth="1.400" /><circle cx="13.500" cy="11.500" r="3.300" fill={Y} /><path d="M12.500 14.500h2v2h-2z" fill="#999" /></>,
  <g fill="#444"><circle cx="2" cy="8" r="1.100" /><circle cx="8" cy="8" r="1.100" /><circle cx="14" cy="8" r="1.100" /></g>,
];

const Sigma = () => (
  <svg width="10" height="11" viewBox="0 0 10 11" fill="none" stroke="#252423" strokeWidth="1.2"><path d="M8.500 3V1.200H1.300L5 5.500 1.300 9.800H8.500V8" /></svg>
);
const Calendar = () => (
  <svg width="12" height="13" viewBox="0 0 12 13" fill="none" stroke="#252423"><rect x=".5" y="1.500" width="11" height="11" /><path d="M.5 4h11M3 0v3M9 0v3" /><path d="M2.500 6.500h7M2.500 8.500h7M2.500 10.500h7" strokeDasharray="1.500 1.200" /></svg>
);
const ChevronDown = () => (
  <svg width="13" height="8" viewBox="0 0 13 8" fill="none" stroke="#605e5c"><path d="M1 1l5.500 5.500L12 1" /></svg>
);
const ChevronRight = () => (
  <svg width="9" height="13" viewBox="0 0 9 13" fill="none" stroke="#484644" strokeWidth="1.200"><path d="M1.500 1l5.500 5.500-5.500 5.500" /></svg>
);

const fields = [["Confirmed", "sum"], ["Country"], ["Date", "date"], ["Deaths", "sum"], ["Last Update", "date"], ["Province/St..."], ["Recovered", "sum"], ["Sno", "sum"], ["Unnamed: 0", "sum"]];

const taskItems = [
  { w: 36, icon: <svg width="17" height="16" viewBox="0 0 17 16" fill="#fff"><path d="M0 2.300L7.500 1.300v6.200H0zM8.300 1.200L17 0v7.500H8.300zM0 8.400h7.500v6.200L0 13.600zM8.300 8.400H17V16L8.300 14.800z" /></svg> },
  { w: 36, icon: <svg width="18" height="17" viewBox="0 0 18 17" fill="none" stroke="#fff" strokeWidth="1.200"><circle cx="11" cy="6.300" r="5.300" /><path d="M7.200 10L1 16.300" /></svg> },
  { w: 37, icon: <svg width="17" height="16" viewBox="0 0 17 16" fill="none" stroke="#fff" strokeWidth="1.200"><path d="M.7 0v2.500h10.600V0M.7 16v-2.500h10.600V16M.7 5h10.600v6H.7zM15 0v3M15 8v8" /><path d="M14 5h2.500v2H14z" fill="#fff" stroke="none" /></svg> },
  { w: 38, open: true, icon: <svg width="16" height="17" viewBox="0 0 16 17"><path d="M.5 7.800C1.200 3 4.300.5 8.200.5c4.700 0 7.300 3.300 7.300 7.800v1.900H5.300c.2 4.300 5.700 4.600 9.200 2.500v3.200c-5.800 2.500-12.200.2-12.200-5.300 0-3 1.700-5 4.400-5.900C5.700 5.600 5.400 6.500 5.300 7.300h5.700c.3-4.300-6.500-5.200-10.500.5z" fill="#1080dc" /></svg> },
  { w: 38, open: true, icon: <svg width="17" height="15" viewBox="0 0 17 15"><path d="M.5 1h6l1 1.500h9V14H.5z" fill="#f2d06b" /><path d="M.5 5h16v9H.5z" fill="#fbe296" /><path d="M3 14V9q0-1.500 1.500-1.500h8Q14 7.500 14 9v5h-3v-3H6v3z" fill="#4ba7d6" /></svg> },
  { w: 35, icon: <svg width="16" height="16" viewBox="0 0 16 16"><path d="M4.500 5V2.500Q4.500 1 6 1h4q1.500 0 1.500 1.500V5" stroke="#fff" fill="none" /><path d="M.5 4h15l-1 11.500h-13z" fill="#fff" /><path d="M5 6h2.700v2.700H5z" fill="#e8552d" /><path d="M8.400 6h2.700v2.700H8.400z" fill="#7eb52b" /><path d="M5 9.500h2.700v2.700H5z" fill="#2aa3e0" /><path d="M8.400 9.500h2.700v2.700H8.400z" fill="#f5b51e" /></svg> },
  { w: 39, icon: <svg width="17" height="14" viewBox="0 0 17 14"><path d="M.5 5L8.500 0l8 5v9H.5z" fill="#0f6cbd" /><path d="M2 4h13v5l-6.500 3L2 9z" fill="#fff" /><path d="M.5 5l8 5 8-5v9H.5z" fill="#2ba0ea" /></svg> },
  { w: 36, open: true, active: true, icon: <svg width="16" height="15" viewBox="0 0 16 15"><rect x=".7" y=".7" width="14.600" height="13.600" rx="2" fill="#f2c811" /><path d="M4 12V8.500M6.700 12V7M9.300 12V5M12 12V3" stroke="#222" strokeWidth="1.600" /></svg> },
  { w: 38, open: true, icon: <svg width="16" height="16" viewBox="0 0 16 16"><circle cx="8" cy="8" r="7.500" fill="#e33b2e" /><path d="M1.500 4.300L5 10.500 8 15.500A7.500 7.500 0 0 1 1.500 4.300z" fill="#2da44e" /><path d="M8 4.500h6.700A7.500 7.500 0 0 1 8 15.500l3-6z" fill="#fbc116" /><circle cx="8" cy="8" r="3.600" fill="#fff" /><circle cx="8" cy="8" r="2.800" fill="#3b7de0" /></svg> },
  { w: 36, open: true, icon: <svg width="16" height="13" viewBox="0 0 16 13"><rect x=".5" y=".5" width="15" height="11" rx="1" fill="#25282c" stroke="#8b8f94" /><path d="M1 2h14" stroke="#b4b8bc" /><path d="M3 5.500h7M3 8h4" stroke="#666" /></svg> },
];

export default function App() {
  return (
    <Window>
      <GlobalStyle />
      <TitleBar>
        <QuickAccess>
          <svg width="16" height="16" viewBox="0 0 16 16" fill="none" stroke="#c8c6c4"><path d="M1 .5h14.500v15H3L.5 13V.5zM3.500 1v6h9V1M4.500 15v-5h7v5M6.500 13v2" /></svg>
          <svg width="16" height="16" viewBox="0 0 16 16" fill="none" stroke="#e1dfdd" strokeWidth="1.200"><path d="M1.500 1v5.500H7M1.500 6.500Q5 2 8.500 2.200 13.500 2.800 13.500 7 13.500 9 7 15.500" /></svg>
          <svg width="16" height="16" viewBox="0 0 16 16" fill="none" stroke="#6e6c6a" strokeWidth="1.200"><path d="M14 1v5.500H8.500M14 6.500Q10.500 2 7 2.200 2 2.800 2 7 2 9 8.500 15.500" /></svg>
        </QuickAccess>
        <WindowTitle>Final_COVID-19 - Power BI Desktop</WindowTitle>
        <WindowControls>
          <SignIn>Sign in</SignIn>
          <Avatar />
          <svg width="98" height="12" viewBox="0 0 98 12" fill="none" stroke="#fff"><path d="M0 6.500h10M44.500 3.500h7.500v7h-7.500zM46.500 3V1.500h7.500v7H52M88.500 1.500l9 9M97.500 1.500l-9 9" /></svg>
        </WindowControls>
      </TitleBar>

      <TabRow>
        <FileTab>File</FileTab>
        <Tab $gap={16} $w={37}>Home</Tab>
        <Tab $gap={30} $w={37} $active>Insert</Tab>
        <Tab $gap={31} $w={59}>Modeling</Tab>
        <Tab $gap={31} $w={30}>View</Tab>
        <Tab $gap={30} $w={30}>Help</Tab>
      </TabRow>
      <Ribbon>
        {ribbon.map((g) => (
          <Group key={g.name} $w={g.w} $pad={g.pad}>
            <GroupItems>
              {g.items.map(({ w, icon: Glyph, lines, caret }) => (
                <RibbonButton key={lines.join()} $w={w}>
                  <Glyph />
                  {lines.map((l, i) => (
                    <LabelLine key={l}>{l}{caret === "inline" && i === lines.length - 1 && <Caret />}</LabelLine>
                  ))}
                  {caret === "below" && <LabelLine><Caret /></LabelLine>}
                </RibbonButton>
              ))}
            </GroupItems>
            <GroupCaption $pad={g.pad}>{g.name}</GroupCaption>
          </Group>
        ))}
        <RibbonCollapse>
          <svg width="9" height="6" viewBox="0 0 9 6" fill="none" stroke={dark} strokeWidth="1.600"><path d="M.7 5l3.800-3.800L8.300 5" /></svg>
        </RibbonCollapse>
      </Ribbon>

      <Work>
        <Rail>
          <RailItem $active>
            <svg width="24" height="18" viewBox="0 0 24 18" fill="none" stroke="#252423" strokeWidth="1.100"><path d="M5.500 3v12.500H18.500M7.500 6.500h2v7h-2zM11.500 8.500h2v5h-2zM15.500 4.500h2v9h-2z" /></svg>
          </RailItem>
          <RailItem>
            <svg width="24" height="18" viewBox="0 0 24 18" fill="none" stroke="#605e5c"><path d="M4.500 1.500h15v14h-15zM4.500 4.500h15M4.500 8.500h15M4.500 12h15M9.500 4.500v11M14.500 4.500v11" /></svg>
          </RailItem>
          <RailItem>
            <svg width="24" height="20" viewBox="0 0 24 20" fill="none" stroke="#605e5c"><path d="M3.500 7.500h7v6h-7zM13.500 1.500h7v6h-7zM13.500 11.500h7v6h-7zM3.500 9.500h7M13.500 3.500h7M13.500 13.500h7M7.500 7V4.500h6M7.500 14v2.500h6" /></svg>
          </RailItem>
        </Rail>

        <Center>
          <Stage>
            <Edge $from="#454443" $to="#787878" />
            <Page>
              <Banner>ข้อมูลสถานการณ์ COVID-19 ในแต่ละประเทศ (นอกจาก Mainland China)</Banner>
              <Board>
                <SlicerColumn>
                  <Slicer>
                    <SlicerTitle>Country</SlicerTitle>
                    <SlicerBody>
                      <SlicerList>
                        {countries.map((c) => (
                          <SlicerRow key={c}><Box /><SlicerLabel>{c}</SlicerLabel></SlicerRow>
                        ))}
                      </SlicerList>
                      <SlicerScroll />
                    </SlicerBody>
                  </Slicer>
                  <Hint>
                    <svg width="36" height="44" viewBox="0 0 36 44" fill="none" stroke="#6ba8da" strokeWidth="1.800"><path d="M17.700 1.500L33 18H27.300V42H8.500V18H2z" /></svg>
                    <span>คลิ๊กเลือก</span>
                    <span>ประเทศที่</span>
                    <span>ต้องการดู</span>
                  </Hint>
                </SlicerColumn>
                <ChartColumn>
                  <SectionTitle $w={273} $size={17.8}>ยอดผู้ติดเชื้อในแต่ละประเทศ</SectionTitle>
                  <ChartCard><ConfirmedChart /></ChartCard>
                  <CountryCard>Australia</CountryCard>
                </ChartColumn>
                <MapColumn>
                  <SectionTitle $w={500} $size={16.3}>แผนที่ภูมิประเทศ</SectionTitle>
                  <MapCard>
                    <MapTitle>Confirmed, Deaths and Recovered by Country</MapTitle>
                    <WorldMap />
                  </MapCard>
                  <Kpis>
                    <Kpi $w={146}><KpiLabel $size={18.2} $h={22}>ยอดผู้ติดเชื้อ(รวม)</KpiLabel><KpiValue $shift={6}>1315</KpiValue></Kpi>
                    <Kpi $w={214}><KpiLabel $size={18.6} $h={22}>ยอดผู้ที่รักษาหายแล้ว(รวม)</KpiLabel><KpiValue $shift={3}>121</KpiValue></Kpi>
                    <Kpi $w={135} $last><KpiLabel $size={16} $h={20}>ยอดผู้เสียชีวิต(รวม)</KpiLabel><KpiValue>5</KpiValue></Kpi>
                  </Kpis>
                  <Plots>
                    <Plot $w={163}><PlotTitle $lh={22}>Country and Confirmed</PlotTitle><BarPlot {...bluePlot} /></Plot>
                    <Plot $w={158} $mr={2}><PlotTitle $lh={14}>Country and Recovered</PlotTitle><BarPlot {...greenPlot} /></Plot>
                    <Plot $w={158}><PlotTitle $lh={16}>Country and Deaths</PlotTitle><BarPlot {...redPlot} /></Plot>
                  </Plots>
                </MapColumn>
              </Board>
            </Page>
            <Edge $from="#787878" $to="#454443" />
            <CanvasRule />
            <FiltersPane>
              <svg width="8" height="14" viewBox="0 0 8 14" fill="none" stroke="#fff" strokeWidth="1.500"><path d="M6.500 1.500L1.500 7l5 5.500" /></svg>
              <FunnelSlot>
                <svg width="13" height="13" viewBox="0 0 13 13" fill="none" stroke="#fff" strokeWidth="1.200"><path d="M11.300 1v11L6.500 8.200H1V5h5.500z" /></svg>
              </FunnelSlot>
              <FiltersLabel>Filters</FiltersLabel>
            </FiltersPane>
          </Stage>
          <PageTabs>
            <PageNav>
              <svg width="6" height="8" viewBox="0 0 6 8" fill="#c0bebc"><path d="M5.500 0v8L.5 4z" /></svg>
              <svg width="6" height="8" viewBox="0 0 6 8" fill="#c0bebc"><path d="M.5 0v8l5-4z" /></svg>
            </PageNav>
            <PageTab>Page 1</PageTab>
            <AddPage>
              <svg width="12" height="12" viewBox="0 0 12 12" stroke="#7b6a2e" strokeWidth="3"><path d="M6 .5v11M.5 6h11" /></svg>
            </AddPage>
          </PageTabs>
        </Center>

        <VizPane>
          <PaneHead $l={13} $r={12}>Visualizations<ChevronRight /></PaneHead>
          <VizGrid>
            {vizIcons.map((icon, i) => (
              <VizCell key={i}><svg width="17" height="17" viewBox="0 0 17 17">{icon}</svg></VizCell>
            ))}
          </VizGrid>
          <WellTabs>
            <WellTab $active>
              <svg width="20" height="22" viewBox="0 0 20 22" fill="none" stroke="#252423" strokeWidth="1.200"><path d="M0 1.500h16" /><rect x=".6" y="4.500" width="18.800" height="6.500" strokeDasharray="2 1.200" /><rect x=".6" y="13.500" width="18.800" height="6.500" strokeDasharray="2 1.200" /></svg>
            </WellTab>
            <WellTab>
              <svg width="20" height="22" viewBox="0 0 20 22" fill="none" stroke="#252423" strokeWidth="1.300"><path d="M1 2.500h14v4H1zM15 4h3v4.500H9V12M7 12h4v8.500H7z" /></svg>
            </WellTab>
          </WellTabs>
          <PaneLabel $mt={6}>Values</PaneLabel>
          <DropWell $mt={5} $h={28} $l={10}>Add data fields here</DropWell>
          <DrillTitle>Drill through</DrillTitle>
          <PaneLabel $mt={15} $l={10}>Cross-report</PaneLabel>
          <Toggle $mt={12}>
            Off
            <svg width="30" height="12" viewBox="0 0 30 12" fill="none" stroke="#605e5c" strokeWidth="2"><circle cx="6" cy="6" r="5" /><path d="M11 6h19" /></svg>
          </Toggle>
          <PaneLabel $mt={20} $l={10}>Keep all filters</PaneLabel>
          <Toggle $mt={12}>
            On
            <svg width="30" height="12" viewBox="0 0 30 12" fill="#605e5c" stroke="#605e5c" strokeWidth="2"><circle cx="24" cy="6" r="5" /><path d="M0 6h19" /></svg>
          </Toggle>
          <DropWell $mt={14} $h={26} $l={8}>Add drill-through fields here</DropWell>
        </VizPane>

        <FieldsPane>
          <PaneHead $l={12} $r={10}>Fields<ChevronRight /></PaneHead>
          <Search>
            <svg width="16" height="16" viewBox="0 0 16 16" fill="none" stroke="#3b3a39" strokeWidth="1.200"><circle cx="10" cy="6" r="5" /><path d="M6.500 9.500L.8 15.200" /></svg>
            Search
          </Search>
          <FieldTree>
            <TableRow>
              <svg width="12" height="8" viewBox="0 0 12 8" fill="none" stroke="#605e5c"><path d="M.5 6.500L6 1.500l5.500 5" /></svg>
              <svg width="14" height="12" viewBox="0 0 14 12" fill="none" stroke="#252423" strokeWidth="1.300"><path d="M.7.7h12.600v10.600H.7zM.7 2h12.600M.7 5.500h12.600M.7 8.500h12.600M4.700 2v9M9.300 2v9" /></svg>
              covid_19BI
            </TableRow>
            <FieldRows>
              {fields.map(([name, kind]) => (
                <FieldRow key={name}>
                  <span>{kind === "date" && <ChevronDown />}</span>
                  <Check />
                  <Kind>{kind === "sum" && <Sigma />}{kind === "date" && <Calendar />}</Kind>
                  <span>{name}</span>
                </FieldRow>
              ))}
            </FieldRows>
          </FieldTree>
        </FieldsPane>
      </Work>

      <StatusBar>PAGE 1 OF 1</StatusBar>

      <Taskbar>
        {taskItems.map(({ w, open, active, icon }, i) => (
          <TaskItem key={i} $w={w} $open={open} $active={active}><TaskIcon>{icon}</TaskIcon></TaskItem>
        ))}
        <Tray>
          <TrayItem $w={26}><svg width="15" height="16" viewBox="0 0 15 16" fill="none" stroke="#fff" strokeWidth="1.200"><circle cx="10.500" cy="3" r="2.400" /><circle cx="5" cy="8" r="2.400" /><path d="M.8 15q0-4.500 4.200-4.500T9.200 15M8 7q2-1.500 4-1 2 .8 2.300 4" /></svg></TrayItem>
          <TrayItem $w={33}><svg width="12" height="8" viewBox="0 0 12 8" fill="none" stroke="#fff" strokeWidth="1.200"><path d="M.5 7L6 1.500 11.500 7" /></svg></TrayItem>
          <TrayItem $w={18}><svg width="16" height="11" viewBox="0 0 16 11"><path d="M3 10.500Q0 10 .3 7.500.8 5.300 3 5.500 4 1 8 1q3 .2 4 3.300 3.500 0 3.700 3.200Q15.500 10.500 12.500 10.500z" fill="#cfcfcf" /><path d="M3 10.500Q2.500 8 5 7L12 4.400q3.500 0 3.700 3.100-.2 3-3.200 3z" fill="#fff" /></svg></TrayItem>
          <TrayItem $w={29}><svg width="15" height="10" viewBox="0 0 15 10" fill="none" stroke="#fff"><path d="M.5 .5h12.500v8.500H.5z" strokeWidth="1.200" /><path d="M14.300 3v4" /><path d="M2.500 2.500h4.500v4.500H2.500z" fill="#fff" stroke="none" /></svg></TrayItem>
          <TrayItem $w={19}><svg width="16" height="14" viewBox="0 0 16 14" fill="none" stroke="#fff"><path d="M.6 5h2.400L6 1.500v11L3 9H.6zM8.500 5q1.500 2 0 4M10.800 3.500q2.500 3.500 0 7" /><path d="M13 1.500q4 5.500 0 11" stroke="#777" /></svg></TrayItem>
          <TrayItem $w={31}><svg width="13" height="13" viewBox="0 0 13 13" fill="none" stroke="#d8d8d8" strokeWidth="1.300"><path d="M.7 12.500A12 12 0 0 1 12.500.7M3.700 12.500A9 9 0 0 1 12.500 4M6.800 12.500A6 6 0 0 1 12.500 7" /><circle cx="11.300" cy="11.300" r="1.400" fill="#fff" stroke="none" /></svg></TrayItem>
          <TrayItem $w={28} $fs={10.5}>ไทย</TrayItem>
          <TrayItem $w={69}>11:37 AM</TrayItem>
          <TrayItem $w={31}><svg width="16" height="15" viewBox="0 0 16 15"><path d="M0 0h16v12h-5.500L8 14.800 5.500 12H0z" fill="#fff" /><path d="M3 3.500h10M3 6h10M3 8.500h6" stroke="#121417" /></svg></TrayItem>
        </Tray>
      </Taskbar>
    </Window>
  );
}
